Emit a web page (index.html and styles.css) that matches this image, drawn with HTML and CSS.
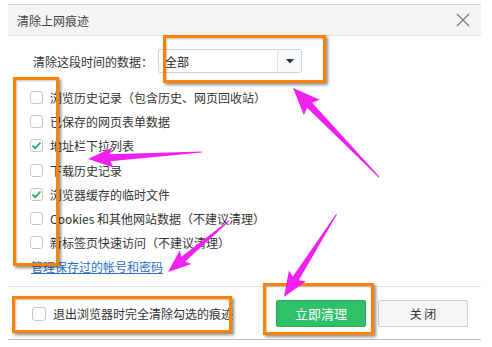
FILE: index.html
```html
<!DOCTYPE html>
<html>
<head>
<meta charset="utf-8">
<link rel="stylesheet" href="styles.css">
</head>
<body>
<div class="dialog">
  <div class="titlebar">
    <span class="title">清除上网痕迹</span>
    <svg class="close" width="14" height="14" viewBox="0 0 14 14"><path d="M1 1L13 13M13 1L1 13" stroke="#777" stroke-width="1.1" fill="none"/></svg>
  </div>
  <div class="content">
    <div class="range">
      <span class="label">清除这段时间的数据：</span>
      <div class="select">
        <span class="sel-text">全部</span>
        <span class="sel-btn"><svg width="8" height="5" viewBox="0 0 8 5"><path d="M0 0H8L4 4.5Z" fill="#333"/></svg></span>
      </div>
    </div>
    <ul class="list">
      <li><span class="cb"></span>浏览历史记录（包含历史、网页回收站）</li>
      <li><span class="cb"></span>已保存的网页表单数据</li>
      <li><span class="cb checked"><svg width="11" height="9" viewBox="0 0 11 9"><path d="M1.5 4.5L4.2 7.2L9.5 1.5" stroke="#22b25b" stroke-width="1.8" fill="none"/></svg></span>地址栏下拉列表</li>
      <li><span class="cb"></span>下载历史记录</li>
      <li><span class="cb checked"><svg width="11" height="9" viewBox="0 0 11 9"><path d="M1.5 4.5L4.2 7.2L9.5 1.5" stroke="#22b25b" stroke-width="1.8" fill="none"/></svg></span>浏览器缓存的临时文件</li>
      <li><span class="cb"></span>Cookies 和其他网站数据（不建议清理）</li>
      <li><span class="cb"></span>新标签页快速访问（不建议清理）</li>
    </ul>
    <a class="link" href="#">管理保存过的帐号和密码</a>
  </div>
  <div class="footer">
    <label class="exit"><span class="cb big"></span>退出浏览器时完全清除勾选的痕迹</label>
    <div class="buttons">
      <button class="btn primary">立即清理</button>
      <button class="btn">关 闭</button>
    </div>
  </div>
</div>

<div class="mark m1"></div>
<div class="mark m2"></div>
<div class="mark m3"></div>
<div class="mark m4"></div>

<svg class="arrows" width="492" height="347" viewBox="0 0 492 347">
  <g fill="#f020f0">
    <g transform="translate(293,88) rotate(-134)">
      <polygon points="-124,-0.5 -24,-3.5 -27,-11 0,0 -27,11 -24,3.5 -124,0.5"/>
    </g>
    <g transform="translate(88,159) rotate(176.5)">
      <polygon points="-114,-0.5 -22,-3.5 -25,-10 0,0 -25,10 -22,3.5 -114,0.5"/>
    </g>
    <g transform="translate(168,272) rotate(140)">
      <polygon points="-80,-0.5 -20,-3 -23,-9 0,0 -23,9 -20,3 -80,0.5"/>
    </g>
    <g transform="translate(284,297) rotate(122.4)">
      <polygon points="-98,-0.5 -22,-3.5 -25,-10 0,0 -25,10 -22,3.5 -98,0.5"/>
    </g>
  </g>
</svg>
</body>
</html>
```

FILE: styles.css
```css
* { box-sizing: border-box; }
html, body { margin: 0; padding: 0; background: #fff; }
body {
  width: 492px; height: 347px; position: relative; overflow: hidden;
  font-family: "Noto Sans CJK SC", "Noto Sans", sans-serif;
  font-size: 12px; color: #333;
}
.dialog {
  margin: 4px 0 0 8px;
  width: 473px; height: 336px;
  border-top: 1px solid #d4d4d4;
  border-bottom: 1px solid #bdbdbd;
  display: flex; flex-direction: column;
}
.titlebar {
  height: 31px; background: #f4f4f4; border-bottom: 1px solid #e3e3e3;
  display: flex; align-items: center; justify-content: space-between;
  padding: 0 11px 0 9px;
}
.title { font-size: 12px; color: #444; }
.close { display: block; }
.content { flex: 1; padding: 13px 0 0 22px; }
.range { display: flex; align-items: center; padding-left: 3px; height: 24px; }
.label { width: 125px; }
.select {
  width: 144px; height: 24px; border: 1px solid #c9d4de; border-radius: 2px;
  display: flex; align-items: center; background: #fff;
}
.sel-text { flex: 1; padding-left: 6px; color: #222; }
.sel-btn {
  width: 24px; height: 22px; border-left: 1px solid #dde3e9; background: #f9fafb;
  display: flex; align-items: center; justify-content: center;
}
.list { list-style: none; margin: 12px 0 0; padding: 0; }
.list li { height: 24.3px; display: flex; align-items: center; }
.cb {
  width: 13px; height: 13px; border: 1px solid #c6c6c6; border-radius: 3px;
  background: #fff; margin-right: 7px; flex: none;
  display: flex; align-items: center; justify-content: center;
}
.cb.big { width: 14px; height: 14px; margin-right: 7px; }
.link {
  display: block; margin-top: 3px; margin-left: 1px; color: #2a6fc4; text-decoration: underline;
  line-height: 17px;
}
.footer {
  height: 53px; border-top: 1px solid #e6e6e6;
  display: flex; align-items: center; justify-content: space-between;
  padding: 1px 13px 0 24px;
}
.exit { display: flex; align-items: center; }
.buttons { display: flex; gap: 12px; }
.btn {
  width: 90px; height: 27px; border: 1px solid #cfcfcf; border-radius: 2px;
  background: #f6f6f6; color: #333; font-family: inherit; font-size: 12px; padding: 0;
}
.btn.primary { background: #2fc06a; border-color: #27a95c; color: #fff; font-size: 13px; }
.mark {
  position: absolute; border: 3px solid #ff8200;
  box-shadow: 2px 2px 3px rgba(0,0,0,0.45), inset 1px 1px 2px rgba(0,0,0,0.25);
}
.m1 { left: 163px; top: 35px; width: 163px; height: 48px; }
.m2 { left: 13px; top: 77px; width: 46px; height: 189px; }
.m3 { left: 12px; top: 296px; width: 220px; height: 37px; }
.m4 { left: 263px; top: 283px; width: 111px; height: 52px; }
.arrows { position: absolute; left: 0; top: 0; }
```
